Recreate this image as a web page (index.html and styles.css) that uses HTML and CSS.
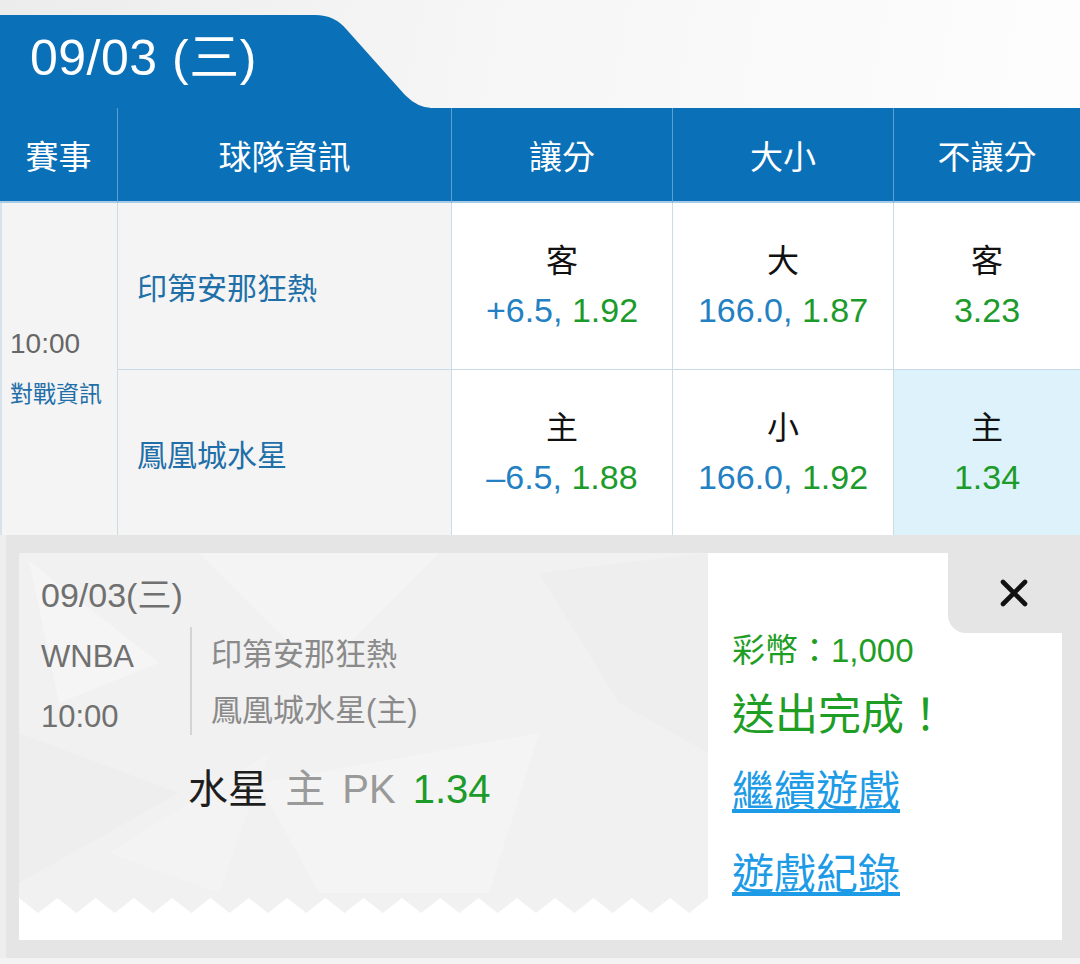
FILE: index.html
```html
<!DOCTYPE html>
<html lang="zh-Hant">
<head>
    <meta charset="UTF-8">
    <meta name="viewport" content="width=device-width, initial-scale=1.0">
    <title>WNBA 投注</title>
    <link rel="stylesheet" href="styles.css">
</head>
<body>
    <div class="date-bar">
        <div class="date-tab">09/03 (三)</div>
    </div>

    <div class="odds-table">
        <div class="head-cell">賽事</div>
        <div class="head-cell">球隊資訊</div>
        <div class="head-cell">讓分</div>
        <div class="head-cell">大小</div>
        <div class="head-cell">不讓分</div>

        <div class="time-cell">
            <div class="time">10:00</div>
            <div class="vs-link">對戰資訊</div>
        </div>

        <div class="team-cell row-top">印第安那狂熱</div>
        <div class="odds-cell row-top">
            <div class="odds-label">客</div>
            <div class="odds-value"><span class="line">+6.5,</span> <span class="price">1.92</span></div>
        </div>
        <div class="odds-cell row-top">
            <div class="odds-label">大</div>
            <div class="odds-value"><span class="line">166.0,</span> <span class="price">1.87</span></div>
        </div>
        <div class="odds-cell row-top last">
            <div class="odds-label">客</div>
            <div class="odds-value"><span class="price">3.23</span></div>
        </div>

        <div class="team-cell">鳳凰城水星</div>
        <div class="odds-cell">
            <div class="odds-label">主</div>
            <div class="odds-value"><span class="line">–6.5,</span> <span class="price">1.88</span></div>
        </div>
        <div class="odds-cell">
            <div class="odds-label">小</div>
            <div class="odds-value"><span class="line">166.0,</span> <span class="price">1.92</span></div>
        </div>
        <div class="odds-cell last selected">
            <div class="odds-label">主</div>
            <div class="odds-value"><span class="price">1.34</span></div>
        </div>
    </div>

    <div class="bet-panel">
        <div class="bet-card">
            <div class="ticket">
                <svg class="ticket-bg" width="689" height="387" viewBox="0 0 689 387">
                    <path fill="#f1f1f1" d="M0 345 L19.1 360 L38.3 345 L57.4 360 L76.6 345 L95.7 360 L114.9 345 L134 360 L153.2 345 L172.3 360 L191.5 345 L210.6 360 L229.8 345 L248.9 360 L268.1 345 L287.2 360 L306.4 345 L325.5 360 L344.7 345 L363.8 360 L383 345 L402.1 360 L421.3 345 L440.4 360 L459.6 345 L478.7 360 L497.9 345 L517 360 L536.2 345 L555.3 360 L574.5 345 L593.6 360 L612.8 345 L631.9 360 L651.1 345 L670.2 360 L689 345 V0 H0 Z"/>
                    <polygon fill="#ffffff" opacity="0.3" points="10,8 140,110 40,150"/>
                    <polygon fill="#ffffff" opacity="0.22" points="180,0 420,0 300,120"/>
                    <polygon fill="#e6e6e6" opacity="0.25" points="0,180 160,240 0,330"/>
                    <polygon fill="#ffffff" opacity="0.25" points="240,230 520,180 470,340 300,340"/>
                    <polygon fill="#e6e6e6" opacity="0.25" points="520,20 689,0 689,200 600,150"/>
                    <polygon fill="#ffffff" opacity="0.2" points="90,300 250,200 200,340"/>
                </svg>
                <div class="ticket-body">
                    <div class="ticket-date">09/03(三)</div>
                    <div class="ticket-match">
                        <div class="ticket-meta">
                            <div>WNBA</div>
                            <div>10:00</div>
                        </div>
                        <div class="ticket-teams">
                            <div>印第安那狂熱</div>
                            <div>鳳凰城水星(主)</div>
                        </div>
                    </div>
                    <div class="ticket-pick">
                        <span class="pick-team">水星</span>
                        <span class="pick-type">主</span>
                        <span class="pick-type">PK</span>
                        <span class="pick-price">1.34</span>
                    </div>
                </div>
            </div>

            <div class="result">
                <div class="coins">彩幣：1,000</div>
                <div class="done">送出完成！</div>
                <a class="result-link" href="#">繼續遊戲</a>
                <a class="result-link" href="#">遊戲紀錄</a>
            </div>

            <button class="close-btn" type="button" aria-label="關閉">
                <svg width="28" height="28" viewBox="0 0 28 28">
                    <path d="M3 3 L25 25 M25 3 L3 25" stroke="#111" stroke-width="4.6" stroke-linecap="round" fill="none"/>
                </svg>
            </button>
        </div>
    </div>
</body>
</html>
```

FILE: styles.css
```css
body {
    margin: 0;
    width: 1080px;
    background-color: #f3f3f3;
    font-family: "Liberation Sans", "Noto Sans CJK TC", sans-serif;
    color: #222;
}

.date-bar {
    height: 108px;
    padding-top: 15px;
    box-sizing: border-box;
    background: linear-gradient(100deg, #ececec 0%, #f6f6f6 45%, #fdfdfd 100%);
}

.date-tab {
    width: 430px;
    height: 93px;
    box-sizing: border-box;
    padding: 14px 0 0 30px;
    background-color: #0a70b8;
    color: #fff;
    font-size: 50px;
    line-height: 58px;
    letter-spacing: 0.5px;
    clip-path: path('M0 0 H315 Q335 0 347 15 L405 80 Q418 93 432 93 H0 Z');
}

.odds-table {
    display: grid;
    grid-template-columns: 118px 334px 221px 221px 186px;
    grid-template-rows: 95px 167px 165px;
}

.head-cell {
    display: flex;
    align-items: center;
    justify-content: center;
    background-color: #0a70b8;
    color: #fff;
    font-size: 33px;
    border-right: 1px solid #5e9fd3;
    border-bottom: 2px solid #a7cae6;
}

.head-cell:nth-child(5) {
    border-right: none;
}

.time-cell {
    grid-row: span 2;
    display: flex;
    flex-direction: column;
    justify-content: center;
    padding-left: 8px;
    background-color: #f4f4f4;
    border-left: 2px solid #d6e3ec;
    border-right: 1px solid #cddbe5;
}

.time {
    font-size: 28px;
    line-height: 50px;
    color: #666;
}

.vs-link {
    font-size: 23px;
    line-height: 50px;
    color: #1f6fa9;
}

.team-cell {
    display: flex;
    align-items: center;
    padding-left: 19px;
    background-color: #f4f4f4;
    color: #1f6fa9;
    font-size: 30px;
    border-right: 1px solid #cddbe5;
}

.odds-cell {
    display: flex;
    flex-direction: column;
    align-items: center;
    justify-content: center;
    background-color: #fff;
    border-right: 1px solid #cddbe5;
}

.odds-cell.last {
    border-right: none;
}

.odds-cell.selected {
    background-color: #def2fb;
}

.row-top {
    border-bottom: 1px solid #c6dae8;
}

.odds-label {
    font-size: 32px;
    line-height: 49px;
    color: #111;
}

.odds-value {
    font-size: 34px;
    line-height: 49px;
}

.line {
    color: #2280c3;
}

.price {
    color: #1c9b2a;
}

.bet-panel {
    height: 423px;
    box-sizing: border-box;
    padding: 18px 18px 18px 19px;
    background-color: #e5e5e5;
    box-shadow: inset 6px 0 0 #eeeeee;
}

.bet-card {
    position: relative;
    display: flex;
    height: 387px;
    background-color: #fff;
}

.ticket {
    position: relative;
    width: 689px;
    flex-shrink: 0;
}

.ticket-bg {
    position: absolute;
    top: 0;
    left: 0;
}

.ticket-body {
    position: relative;
    padding: 22px 0 0 22px;
}

.ticket-date {
    font-size: 34px;
    line-height: 40px;
    color: #707070;
}

.ticket-match {
    display: flex;
    margin-top: 12px;
}

.ticket-meta {
    width: 149px;
    font-size: 31px;
    line-height: 60px;
    color: #707070;
}

.ticket-teams {
    height: 108px;
    padding-left: 19px;
    border-left: 2px solid #d4d4d4;
    font-size: 31px;
    line-height: 56px;
    color: #8a8a8a;
}

.ticket-pick {
    margin-top: 17px;
    padding-left: 147px;
    font-size: 40px;
    line-height: 50px;
}

.ticket-pick span + span {
    margin-left: 6px;
}

.pick-team {
    color: #1e1e1e;
}

.pick-type {
    color: #9a9a9a;
}

.pick-price {
    color: #1c9b2a;
}

.result {
    flex: 1;
    padding: 78px 0 0 24px;
}

.coins {
    font-size: 33px;
    line-height: 40px;
    color: #1f9e25;
}

.done {
    margin-top: 16px;
    font-size: 43px;
    line-height: 56px;
    color: #1f9e25;
}

.result-link {
    display: block;
    width: fit-content;
    font-size: 42px;
    line-height: 56px;
    color: #1d9be6;
    text-decoration: underline;
    text-underline-offset: 3px;
}

.done + .result-link {
    margin-top: 21px;
}

.result-link + .result-link {
    margin-top: 27px;
}

.close-btn {
    position: absolute;
    top: 0;
    right: 0;
    width: 114px;
    height: 80px;
    display: flex;
    align-items: center;
    justify-content: center;
    padding: 0 0 0 18px;
    border: none;
    border-bottom-left-radius: 18px;
    background-color: #e5e5e5;
    cursor: pointer;
}
```
